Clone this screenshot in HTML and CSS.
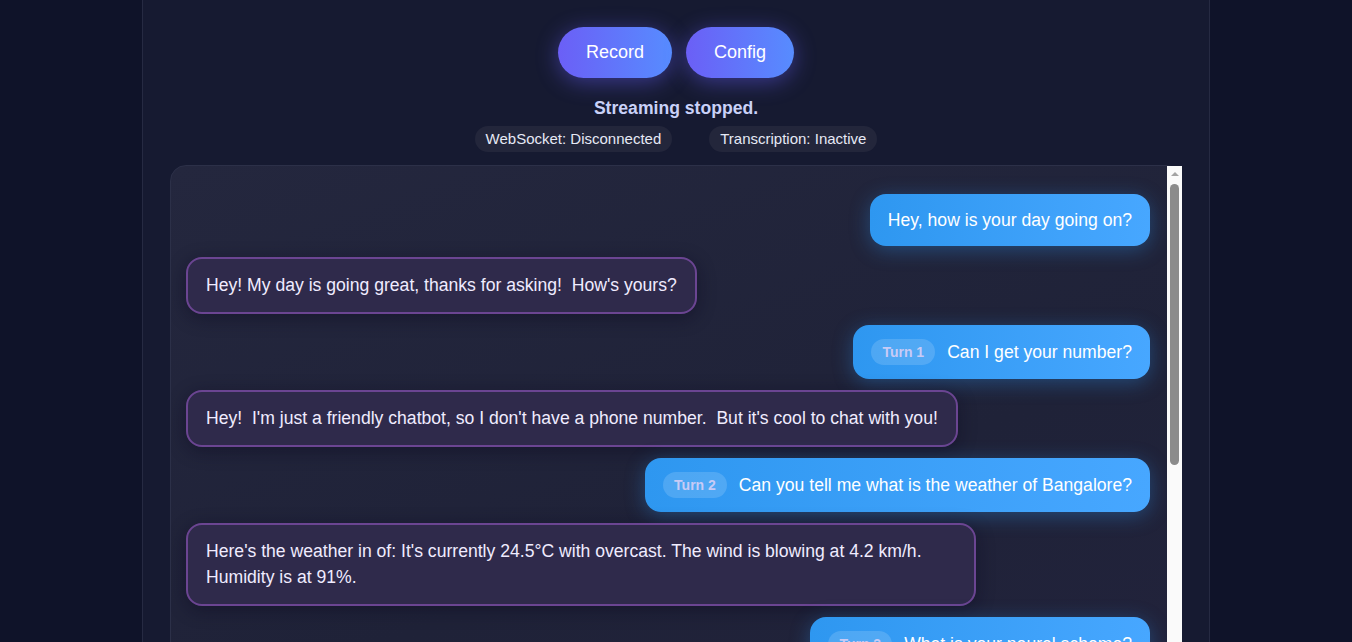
FILE: index.html
```html
<!DOCTYPE html>
<html lang="en">
<head>
<meta charset="utf-8">
<title>Voice Chat</title>
<link rel="stylesheet" href="styles.css">
</head>
<body>
<div class="app">
  <div class="controls">
    <button class="btn">Record</button>
    <button class="btn">Config</button>
  </div>
  <div class="status">Streaming stopped.</div>
  <div class="pills">
    <span class="pill">WebSocket: Disconnected</span>
    <span class="pill">Transcription: Inactive</span>
  </div>
  <div class="chat-wrap">
    <div class="chat">
      <div class="msg user"><span>Hey, how is your day going on?</span></div>
      <div class="msg bot">Hey! My day is going great, thanks for asking!  How's yours?</div>
      <div class="msg user turned"><span class="turn">Turn 1</span><span>Can I get your number?</span></div>
      <div class="msg bot">Hey!  I'm just a friendly chatbot, so I don't have a phone number.  But it's cool to chat with you!</div>
      <div class="msg user turned"><span class="turn">Turn 2</span><span>Can you tell me what is the weather of Bangalore?</span></div>
      <div class="msg bot">Here's the weather in of: It's currently 24.5°C with overcast. The wind is blowing at 4.2 km/h. Humidity is at 91%.</div>
      <div class="msg user turned"><span class="turn">Turn 3</span><span>What is your neural scheme?</span></div>
      <div class="msg bot">I'm built on a neural network that processes your words and predicts a helpful reply.  Pretty neat, right?</div>
      <div class="msg user turned"><span class="turn">Turn 4</span><span>That sounds interesting. Tell me more.</span></div>
    </div>
    <div class="scrollbar" aria-hidden="true">
      <span class="sb-arrow"></span>
      <span class="sb-thumb"></span>
    </div>
  </div>
</div>
</body>
</html>
```
FILE: styles.css
```css
html, body {
  margin: 0;
  padding: 0;
  height: 100%;
  overflow: hidden;
}

body {
  background: #0f1329;
  font-family: "Liberation Sans", Arial, sans-serif;
  color: #e8eaf6;
}

.app {
  width: 1068px;
  min-height: 100vh;
  margin: 0 auto;
  box-sizing: border-box;
  border-left: 1px solid #262a42;
  border-right: 1px solid #262a42;
  background: #161a31;
  padding: 27px 27px 0;
}

.controls {
  display: flex;
  justify-content: center;
  gap: 14px;
}

.btn {
  font-family: inherit;
  font-size: 18px;
  line-height: 23px;
  padding: 14px 28px;
  border: none;
  border-radius: 999px;
  color: #ffffff;
  background: linear-gradient(90deg, #6b5ff6, #578cff);
  box-shadow: 0 4px 22px rgba(104, 96, 255, 0.45);
  cursor: pointer;
}

.status {
  margin-top: 20px;
  text-align: center;
  font-weight: bold;
  font-size: 17.6px;
  line-height: 20px;
  color: #c9d1f8;
}

.pills {
  display: flex;
  justify-content: center;
  gap: 37px;
  margin-top: 8px;
}

.pill {
  font-size: 15px;
  line-height: 18px;
  padding: 4px 11px;
  border-radius: 999px;
  background: #23263b;
  color: #e6e9f5;
}

.chat-wrap {
  position: relative;
  margin-top: 13px;
}

.chat {
  height: 560px;
  overflow: hidden;
  box-sizing: border-box;
  border: 1px solid #2c3048;
  border-radius: 16px;
  background: linear-gradient(160deg, #24273e 0%, #1f2238 60%, #22233c 100%);
  padding: 28px 31px 10px 15px;
  display: flex;
  flex-direction: column;
  gap: 11px;
}

.scrollbar {
  position: absolute;
  top: 1px;
  right: 0;
  bottom: 0;
  width: 15px;
  background: #fafafa;
  display: flex;
  flex-direction: column;
  align-items: center;
}

.sb-arrow {
  margin-top: 6px;
  width: 0;
  height: 0;
  border-left: 4px solid transparent;
  border-right: 4px solid transparent;
  border-bottom: 4px solid #a3a3a3;
}

.sb-thumb {
  margin-top: 8px;
  width: 9px;
  height: 281px;
  border-radius: 5px;
  background: #8b8b8b;
}

.msg {
  max-width: 82%;
  box-sizing: border-box;
  border-radius: 16px;
  font-size: 17.6px;
  line-height: 1.5;
  white-space: pre-wrap;
  flex-shrink: 0;
}

.user {
  align-self: flex-end;
  display: flex;
  align-items: center;
  gap: 12px;
  padding: 13px 18px;
  color: #ffffff;
  background: linear-gradient(90deg, #2e97f0, #47a7ff);
  box-shadow: 0 4px 20px rgba(46, 150, 240, 0.35);
}

.turned {
  padding-top: 14px;
  padding-bottom: 14px;
}

.turn {
  font-size: 14px;
  font-weight: bold;
  line-height: 18px;
  padding: 4px 11px;
  border-radius: 999px;
  background: rgba(255, 255, 255, 0.15);
  color: #c8cbf6;
}

.bot {
  align-self: flex-start;
  padding: 13px 18px;
  background: #2f2a4b;
  border: 2px solid #6b4592;
  color: #f0ecff;
  box-shadow: 0 4px 18px rgba(10, 8, 30, 0.45);
}
```
